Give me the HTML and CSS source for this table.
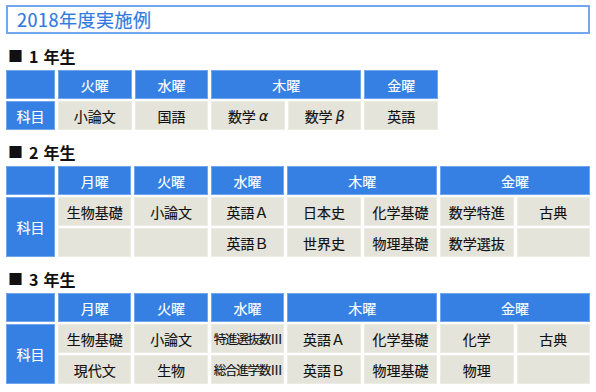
FILE: index.html
```html
<!DOCTYPE html>
<html lang="ja">
<head>
<meta charset="utf-8">
<title>2018年度実施例</title>
<link rel="stylesheet" href="styles.css">
</head>
<body>
<div class="page">
  <div class="title">2018年度実施例</div>

  <section class="grade">
    <h2 class="grade-title"><span class="mark">■</span>1<span class="gap"></span>年生</h2>
    <div class="tt tt-5">
      <div class="cell head"></div>
      <div class="cell head">火曜</div>
      <div class="cell head">水曜</div>
      <div class="cell head span2">木曜</div>
      <div class="cell head">金曜</div>
      <div class="cell head">科目</div>
      <div class="cell">小論文</div>
      <div class="cell">国語</div>
      <div class="cell">数学<i class="greek">α</i></div>
      <div class="cell">数学<i class="greek">β</i></div>
      <div class="cell">英語</div>
    </div>
  </section>

  <section class="grade">
    <h2 class="grade-title"><span class="mark">■</span>2<span class="gap"></span>年生</h2>
    <div class="tt tt-7">
      <div class="cell head"></div>
      <div class="cell head">月曜</div>
      <div class="cell head">火曜</div>
      <div class="cell head">水曜</div>
      <div class="cell head span2">木曜</div>
      <div class="cell head span2">金曜</div>
      <div class="cell head rowspan2">科目</div>
      <div class="cell">生物基礎</div>
      <div class="cell">小論文</div>
      <div class="cell">英語Ａ</div>
      <div class="cell">日本史</div>
      <div class="cell">化学基礎</div>
      <div class="cell">数学特進</div>
      <div class="cell">古典</div>
      <div class="cell"></div>
      <div class="cell"></div>
      <div class="cell">英語Ｂ</div>
      <div class="cell">世界史</div>
      <div class="cell">物理基礎</div>
      <div class="cell">数学選抜</div>
      <div class="cell"></div>
    </div>
  </section>

  <section class="grade">
    <h2 class="grade-title"><span class="mark">■</span>3<span class="gap"></span>年生</h2>
    <div class="tt tt-7">
      <div class="cell head"></div>
      <div class="cell head">月曜</div>
      <div class="cell head">火曜</div>
      <div class="cell head">水曜</div>
      <div class="cell head span2">木曜</div>
      <div class="cell head span2">金曜</div>
      <div class="cell head rowspan2">科目</div>
      <div class="cell">生物基礎</div>
      <div class="cell">小論文</div>
      <div class="cell small">特進選抜数Ⅲ</div>
      <div class="cell">英語Ａ</div>
      <div class="cell">化学基礎</div>
      <div class="cell">化学</div>
      <div class="cell">古典</div>
      <div class="cell">現代文</div>
      <div class="cell">生物</div>
      <div class="cell small">総合進学数Ⅲ</div>
      <div class="cell">英語Ｂ</div>
      <div class="cell">物理基礎</div>
      <div class="cell">物理</div>
      <div class="cell"></div>
    </div>
  </section>
</div>
</body>
</html>
```
FILE: styles.css
```css
html, body {
  margin: 0;
  padding: 0;
  background: #ffffff;
}

body {
  font-family: "Noto Sans CJK JP", "Noto Sans", sans-serif;
  color: #111111;
}

.page {
  padding: 5px 6px 0 6px;
  width: 584px;
}

.title {
  box-sizing: border-box;
  height: 29px;
  border: 2px solid #73a8f0;
  padding: 0 0 0 9px;
  font-size: 18px;
  line-height: 25px;
  color: #2f7ade;
  letter-spacing: 0.5px;
  margin-bottom: 2px;
  -webkit-text-stroke: 0.2px #2f7ade;
}

.grade-title {
  display: flex;
  align-items: center;
  margin: 13px 0 5px 2px;
  font-size: 16px;
  line-height: 18px;
  font-weight: 700;
  color: #111111;
}

.mark {
  font-size: 15px;
  margin-right: 6px;
}

.gap {
  display: inline-block;
  width: 5px;
}

.tt {
  display: grid;
  grid-auto-rows: 29px;
  column-gap: 3px;
  row-gap: 2px;
}

.tt-5 {
  width: 432px;
  grid-template-columns: 49px repeat(5, 1fr);
}

.tt-7 {
  width: 584px;
  grid-template-columns: 49px repeat(7, 1fr);
}

.cell {
  box-sizing: border-box;
  display: flex;
  align-items: center;
  justify-content: center;
  background: #e4e4db;
  border: 1px solid #ecece4;
  font-size: 14px;
  color: #111111;
  white-space: nowrap;
  -webkit-text-stroke: 0.15px #111111;
}

.cell.head {
  background: #3580e2;
  border-color: #6fa6ee;
  color: #ffffff;
  -webkit-text-stroke: 0.15px #ffffff;
}

.span2 {
  grid-column: span 2;
}

.rowspan2 {
  grid-row: span 2;
}

.greek {
  font-family: "DejaVu Sans", sans-serif;
  font-style: italic;
  margin-left: 3px;
}

.small {
  font-size: 12.5px;
  letter-spacing: -1.2px;
}
```
